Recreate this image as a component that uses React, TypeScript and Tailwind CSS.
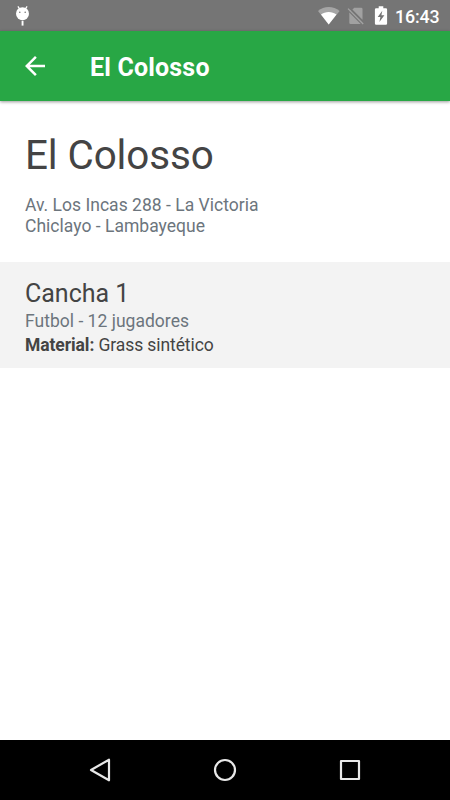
const StatusBar = () => {
  return (
    <div className="h-[31px] shrink-0 bg-[#757575] flex items-center justify-between pl-[15px] pr-[10px] text-white">
      <svg className="w-4 h-[31px]" viewBox="15 0 16 31" fill="currentColor">
        <ellipse cx="22.500" cy="13.700" rx="6.500" ry="6.500" />
        <path d="M17.900 6.300L20 9.500M27.100 6.300L25 9.500" stroke="currentColor" strokeWidth="1.300" />
        <path d="M21.600 20.800h1.900v4.800h-1.900z" />
        <circle cx="19.800" cy="12.200" r=".8" fill="#757575" />
        <circle cx="25.200" cy="12.200" r=".8" fill="#757575" />
      </svg>
      <div className="flex items-center">
        <svg className="w-[72px] h-[31px] mr-[6px]" viewBox="317 0 72 31" fill="currentColor">
          <path d="M328.700 24.500L318 11c3-2.600 6.700-3.900 10.700-3.900s7.800 1.300 10.900 3.900z" opacity=".35" />
          <path d="M328.700 24.500L321 14.600c2-1.700 4.800-2.600 7.700-2.600s5.700.9 7.800 2.600z" />
          <path d="M352.400 9.600L354.300 7.700H361.200a1.300 1.300 0 0 1 1.300 1.300V19.700zM349.300 12.600L360.700 24H350.600a1.300 1.300 0 0 1-1.300-1.300z" opacity=".32" />
          <path d="M350 10.600L363.200 24" fill="none" stroke="#a4a4a4" strokeWidth="1.300" />
          <path d="M348 8.600L350.500 11.100" fill="none" stroke="#a4a4a4" strokeWidth="1.300" />
          <path d="M378.700 6.300h4.600v2h2.600a1.200 1.200 0 0 1 1.200 1.200v14a1.200 1.200 0 0 1-1.200 1.200h-9.800a1.200 1.200 0 0 1-1.200-1.200v-14a1.200 1.200 0 0 1 1.200-1.200h2.600z" />
          <path d="M382.300 10.800l-4.600 6.200h2.700l-1 5 5-6.700h-3z" fill="#757575" />
        </svg>
        <span className="text-[17.800px] font-medium leading-none pt-[2px] w-[45px] whitespace-nowrap tracking-[-0.1px]">16:43</span>
      </div>
    </div>
  );
};

const Header = () => {
  return (
    <header className="h-[70px] shrink-0 bg-[#28a745] text-white flex items-center pl-5 shadow-[0_1px_3px_rgba(0,0,0,0.4)]">
      <svg className="w-[30px] h-[30px]" viewBox="0 0 24 24" fill="currentColor">
        <path d="M20 11H7.830l5.590-5.590L12 4l-8 8 8 8 1.410-1.410L7.830 13H20v-2z" />
      </svg>
      <h1 className="ml-10 pt-[4px] text-[25px] leading-[30px] font-bold tracking-[0.18px]">El Colosso</h1>
    </header>
  );
};

const NavBar = () => {
  return (
    <nav className="mt-auto h-[60px] shrink-0 bg-black flex items-center justify-center gap-[101px] text-[#e8e8e8]">
      <svg className="w-6 h-6" viewBox="0 0 24 24" fill="none" stroke="currentColor" strokeWidth="2.200" strokeLinejoin="round">
        <path d="M3 12L21 1.700v20.600z" />
      </svg>
      <svg className="w-6 h-6" viewBox="0 0 24 24" fill="none" stroke="currentColor" strokeWidth="2.200">
        <circle cx="12" cy="12" r="10" />
      </svg>
      <svg className="w-6 h-6" viewBox="0 0 24 24" fill="none" stroke="currentColor" strokeWidth="2.200" strokeLinejoin="round">
        <path d="M3 3h18v18H3z" />
      </svg>
    </nav>
  );
};

const App = () => {
  return (
    <div className="w-full h-screen flex flex-col bg-white font-[Roboto,sans-serif]">
      <StatusBar />
      <Header />
      <section className="h-[161px] shrink-0 px-[25px] pt-[31px]">
        <h2 className="text-[40.400px] leading-[48px] tracking-[-0.1px] text-[#444]">El Colosso</h2>
        <p className="mt-[15px] text-[17.500px] leading-[21px] tracking-[0.02px] text-[#6c757d]">
          Av. Los Incas 288 - La Victoria
          <br />
          Chiclayo - Lambayeque
        </p>
      </section>
      <section className="h-[106px] shrink-0 bg-[#f3f3f3] px-[25px] pt-4 text-[#444]">
        <h3 className="text-[25px] leading-[32px]">Cancha 1</h3>
        <p className="text-[17.500px] leading-[23px] tracking-[0.02px] text-[#6c757d]">Futbol - 12 jugadores</p>
        <p className="text-[17.500px] leading-[24px] tracking-[-0.090px]">
          <b>Material:</b> Grass sintético
        </p>
      </section>
      <NavBar />
    </div>
  );
};

export default App;
